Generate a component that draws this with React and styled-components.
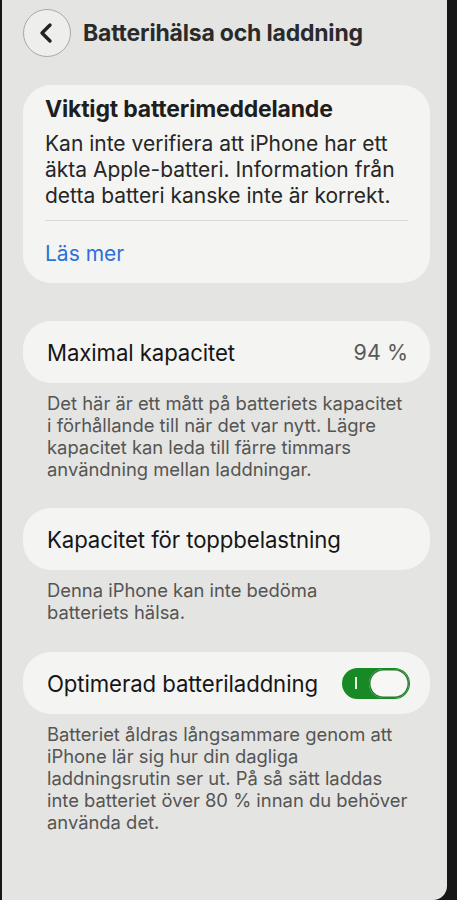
import React from "react";
import styled, { createGlobalStyle } from "styled-components";

const Global = createGlobalStyle`
  html, body { margin: 0; padding: 0; background: #161616; }
  body { font-family: Inter, "Noto Sans", "Liberation Sans", sans-serif; -webkit-font-smoothing: antialiased; }
`;

const Screen = styled.div`
  width: 445px;
  min-height: 900px;
  margin-left: 2px;
  background: #e4e4e2;
  border-bottom-right-radius: 14px;
  box-sizing: border-box;
  padding: 9px 17px 40px 21px;
  display: flex;
  flex-direction: column;
`;

const Header = styled.header`
  display: flex;
  align-items: center;
  gap: 12px;
  height: 48px;
`;

const BackButton = styled.button`
  width: 48px;
  height: 48px;
  border-radius: 50%;
  border: 1.5px solid #a9a9a7;
  background: #eeeeec;
  display: flex;
  align-items: center;
  justify-content: center;
  padding: 0;
  box-sizing: border-box;
`;

const Title = styled.h1`
  margin: 0;
  font-size: 23px;
  font-weight: 700;
  color: #2a2a2a;
  letter-spacing: -0.2px;
`;

const Card = styled.section`
  background: #f4f4f2;
  border-radius: 28px;
  margin-top: ${(p) => p.$mt || 0}px;
`;

const NoticeCard = styled(Card)`
  padding: 10px 22px 16px 22px;
`;

const NoticeTitle = styled.h2`
  margin: 0;
  font-size: 23px;
  font-weight: 700;
  color: #1e1e1e;
  line-height: 28px;
  letter-spacing: -0.2px;
`;

const NoticeBody = styled.p`
  margin: 8px 0 0;
  font-size: 21px;
  line-height: 26px;
  color: #262626;
  white-space: nowrap;
`;

const Divider = styled.div`
  height: 1px;
  background: #d8d8d6;
  margin: 11px 0 0;
`;

const Link = styled.a`
  display: block;
  margin-top: 20px;
  font-size: 21px;
  line-height: 26px;
  color: #2f6fd8;
`;

const RowCard = styled(Card)`
  height: 62px;
  padding: 0 20px 0 24px;
  display: flex;
  align-items: center;
  justify-content: space-between;
`;

const RowLabel = styled.span`
  font-size: 22.2px;
  color: #161616;
  letter-spacing: -0.1px;
`;

const RowValue = styled.span`
  font-size: 21.5px;
  color: #5a5a5a;
  margin-right: 2px;
`;

const Footnote = styled.p`
  margin: 9px 0 0;
  padding: 0 0 0 24px;
  font-size: 18.4px;
  line-height: 22px;
  color: #555553;
  white-space: nowrap;
`;

const Toggle = styled.div`
  width: 68px;
  height: 31px;
  border-radius: 16px;
  background: #178a26;
  position: relative;
  flex-shrink: 0;
`;

const ToggleMark = styled.span`
  position: absolute;
  left: 13px;
  top: 9px;
  width: 1.5px;
  height: 12px;
  background: #e8f5e8;
`;

const Knob = styled.span`
  position: absolute;
  right: 1px;
  top: 1px;
  width: 40px;
  height: 29px;
  border-radius: 15px;
  background: #f7f7f5;
  box-shadow: inset 0 0 0 1.5px #2f7a35;
`;

export default function App() {
  return (
    <>
      <Global />
      <Screen>
        <Header>
          <BackButton aria-label="Tillbaka">
            <svg width="20" height="22" viewBox="0 0 20 22">
              <path d="M13 3 L5 11 L13 19" fill="none" stroke="#222" strokeWidth="3.4" strokeLinecap="round" strokeLinejoin="round" />
            </svg>
          </BackButton>
          <Title>Batterihälsa och laddning</Title>
        </Header>

        <NoticeCard $mt={28}>
          <NoticeTitle>Viktigt batterimeddelande</NoticeTitle>
          <NoticeBody>
            Kan inte verifiera att iPhone har ett<br />
            äkta Apple-batteri. Information från<br />
            detta batteri kanske inte är korrekt.
          </NoticeBody>
          <Divider />
          <Link>Läs mer</Link>
        </NoticeCard>

        <RowCard $mt={38}>
          <RowLabel>Maximal kapacitet</RowLabel>
          <RowValue>94 %</RowValue>
        </RowCard>
        <Footnote>
          Det här är ett mått på batteriets kapacitet<br />
          i förhållande till när det var nytt. Lägre<br />
          kapacitet kan leda till färre timmars<br />
          användning mellan laddningar.
        </Footnote>

        <RowCard $mt={28}>
          <RowLabel>Kapacitet för toppbelastning</RowLabel>
        </RowCard>
        <Footnote>
          Denna iPhone kan inte bedöma<br />
          batteriets hälsa.
        </Footnote>

        <RowCard $mt={29}>
          <RowLabel>Optimerad batteriladdning</RowLabel>
          <Toggle>
            <ToggleMark />
            <Knob />
          </Toggle>
        </RowCard>
        <Footnote>
          Batteriet åldras långsammare genom att<br />
          iPhone lär sig hur din dagliga<br />
          laddningsrutin ser ut. På så sätt laddas<br />
          inte batteriet över 80 % innan du behöver<br />
          använda det.
        </Footnote>
      </Screen>
    </>
  );
}
